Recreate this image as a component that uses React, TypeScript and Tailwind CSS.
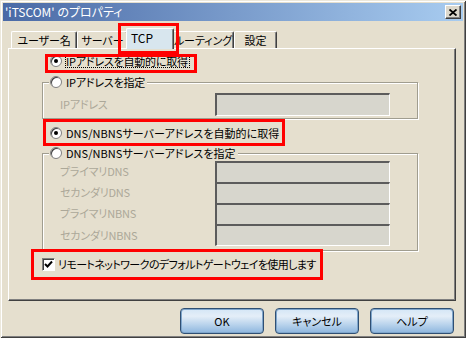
import React from "react";

function Radio({ checked }: { checked?: boolean }) {
  return (
    <span className="inline-flex w-[12px] h-[12px] rounded-full bg-white border border-[#808080] shadow-[inset_1px_1px_0_#404040] items-center justify-center shrink-0">
      {checked && <span className="w-[4px] h-[4px] rounded-full bg-black" />}
    </span>
  );
}

function Tab({ label, w, selected }: { label: string; w: number; selected?: boolean }) {
  if (selected) {
    return (
      <div
        style={{ width: w }}
        className="relative z-10 -mx-[2px] -mb-[1px] h-[21px] bg-[#d8e6ee] border-t border-l border-white border-r border-r-[#404040] shadow-[inset_-1px_0_0_#808080] rounded-t-[2px] flex items-start pl-[4px] pt-[2px] text-[12px] leading-[14px]"
      >
        {label}
      </div>
    );
  }
  return (
    <div
      style={{ width: w }}
      className="h-[17px] border-t border-l border-white border-r border-r-[#404040] shadow-[inset_-1px_0_0_#808080] rounded-t-[2px] flex items-start justify-center pt-[1px] text-[11px] leading-[14px] tracking-[-0.1px] whitespace-nowrap"
    >
      {label}
    </div>
  );
}

function Field({ h, last }: { h: number; last?: boolean }) {
  return (
    <div
      style={{ height: h }}
      className={
        "w-[175px] bg-[#d7d6cd] border-t-2 border-l-2 border-[#5c5c5c] border-r border-r-white " +
        (last ? "border-b border-b-white" : "")
      }
    />
  );
}

function Button({ label }: { label: string }) {
  return (
    <div className="w-[84px] h-[26px] rounded-[4px] border border-[#2f4f73] bg-[linear-gradient(to_bottom,#d4e6f6_0%,#e4eef8_30%,#b9d3ec_65%,#8db6de_100%)] shadow-[inset_0_0_0_1px_#7fa6cc] flex items-center justify-center text-[11px] text-black">
      {label}
    </div>
  );
}

export default function App() {
  return (
    <div className="relative w-[466px] h-[338px] font-['Noto_Sans_CJK_JP','Noto_Sans',sans-serif] [font-feature-settings:'palt'] text-black overflow-hidden">
      <div className="w-full h-full bg-[#e5dfce] p-[3px] shadow-[inset_1px_1px_0_#ece8dc,inset_-1px_-1px_0_#404040,inset_2px_2px_0_#ffffff,inset_-2px_-2px_0_#808080] flex flex-col">
        {/* Title bar */}
        <div className="h-[18px] bg-[linear-gradient(to_right,#4a6aa6,#a8ccf0)] flex items-center justify-between pl-[2px] pr-[2px]">
          <span className="text-white text-[12px] leading-[14px]">'iTSCOM' のプロパティ</span>
          <div className="w-[16px] h-[14px] bg-[#dcd8cc] border-t border-l border-white border-r border-b border-r-[#404040] border-b-[#404040] shadow-[inset_-1px_-1px_0_#808080] flex items-center justify-center">
            <svg width="8" height="7" viewBox="0 0 8 7">
              <path d="M0.5 0.5 L7.5 6.5 M7.5 0.5 L0.5 6.5" stroke="#000" strokeWidth="1.8" />
            </svg>
          </div>
        </div>

        {/* Tabs */}
        <div className="mt-[7px] h-[20px] flex items-end pl-[8px]">
          <Tab label="ユーザー名" w={66} />
          <Tab label="サーバー" w={51} />
          <Tab label="TCP" w={48} selected />
          <Tab label="ルーティング" w={62} />
          <Tab label="設定" w={43} />
        </div>

        {/* Panel */}
        <div className="ml-[5px] w-[448px] h-[253px] border-t border-l border-white border-r border-b border-r-[#404040] border-b-[#404040] shadow-[inset_-1px_-1px_0_#808080] flex flex-col text-[11px] tracking-[-0.2px]">
          {/* Radio 1 */}
          <div className="mt-[4px] h-[16px] pl-[41px] flex items-center gap-[3px]">
            <Radio checked />
            <span className="border border-dotted border-black pr-[1px] leading-[11px]">IPアドレスを自動的に取得</span>
          </div>

          {/* Group 1 */}
          <div className="relative mt-[13px] ml-[33px] w-[376px] h-[37px] border border-[#a09d8f] shadow-[1px_1px_0_#fff,inset_1px_1px_0_#fff] pl-[17px] pt-[10px] flex items-start">
            <div className="absolute left-[6px] -top-[9px] h-[16px] bg-[#e5dfce] pl-[1px] pr-[2px] flex items-center gap-[4px]">
              <Radio />
              <span className="leading-[14px]">IPアドレスを指定</span>
            </div>
            <div className="w-[155px] h-[23px] flex items-center text-[#aca899]">IPアドレス</div>
            <Field h={23} last />
          </div>

          {/* Radio 3 */}
          <div className="mt-[6px] h-[16px] pl-[41px] flex items-center gap-[4px]">
            <Radio checked />
            <span className="leading-[14px] tracking-[0.05px]">DNS/NBNSサーバーアドレスを自動的に取得</span>
          </div>

          {/* Group 2 */}
          <div className="relative mt-[12px] ml-[33px] w-[376px] h-[98px] border border-[#a09d8f] shadow-[1px_1px_0_#fff,inset_1px_1px_0_#fff] pl-[17px] pt-[7px] flex flex-col">
            <div className="absolute left-[6px] -top-[9px] h-[16px] bg-[#e5dfce] pl-[1px] pr-[2px] flex items-center gap-[4px]">
              <Radio />
              <span className="leading-[14px] tracking-[0.05px]">DNS/NBNSサーバーアドレスを指定</span>
            </div>
            {[
              ["プライマリDNS", 21, false],
              ["セカンダリDNS", 21, false],
              ["プライマリNBNS", 21, false],
              ["セカンダリNBNS", 22, true],
            ].map(([label, h, last]) => (
              <div key={label as string} className="flex items-center">
                <div className="w-[155px] text-[#aca899]">{label as string}</div>
                <Field h={h as number} last={last as boolean} />
              </div>
            ))}
          </div>

          {/* Checkbox */}
          <div className="mt-[5px] h-[16px] pl-[33px] flex items-center gap-[3px]">
            <span className="w-[13px] h-[13px] bg-white border-t border-l border-[#808080] border-r border-b border-r-white border-b-white shadow-[inset_1px_1px_0_#404040] flex items-center justify-center">
              <svg width="9" height="9" viewBox="0 0 9 9">
                <path d="M1 4 L3.5 6.5 L8 1.5" fill="none" stroke="#000" strokeWidth="2" />
              </svg>
            </span>
            <span className="leading-[14px] tracking-[-0.6px]">リモートネットワークのデフォルトゲートウェイを使用します</span>
          </div>
        </div>

        {/* Buttons */}
        <div className="mt-[7px] flex justify-end gap-[11px] pr-[9px]">
          <Button label="OK" />
          <Button label="キャンセル" />
          <Button label="ヘルプ" />
        </div>
      </div>

      {/* Red annotation boxes */}
      <div className="absolute left-[118px] top-[23px] w-[61px] h-[31px] border-[3px] border-[#ff0000]" />
      <div className="absolute left-[45px] top-[54px] w-[152px] h-[19px] border-[3px] border-[#ff0000]" />
      <div className="absolute left-[43px] top-[119px] w-[242px] h-[27px] border-[3px] border-[#ff0000]" />
      <div className="absolute left-[31px] top-[249px] w-[292px] h-[31px] border-[3px] border-[#ff0000]" />
    </div>
  );
}
